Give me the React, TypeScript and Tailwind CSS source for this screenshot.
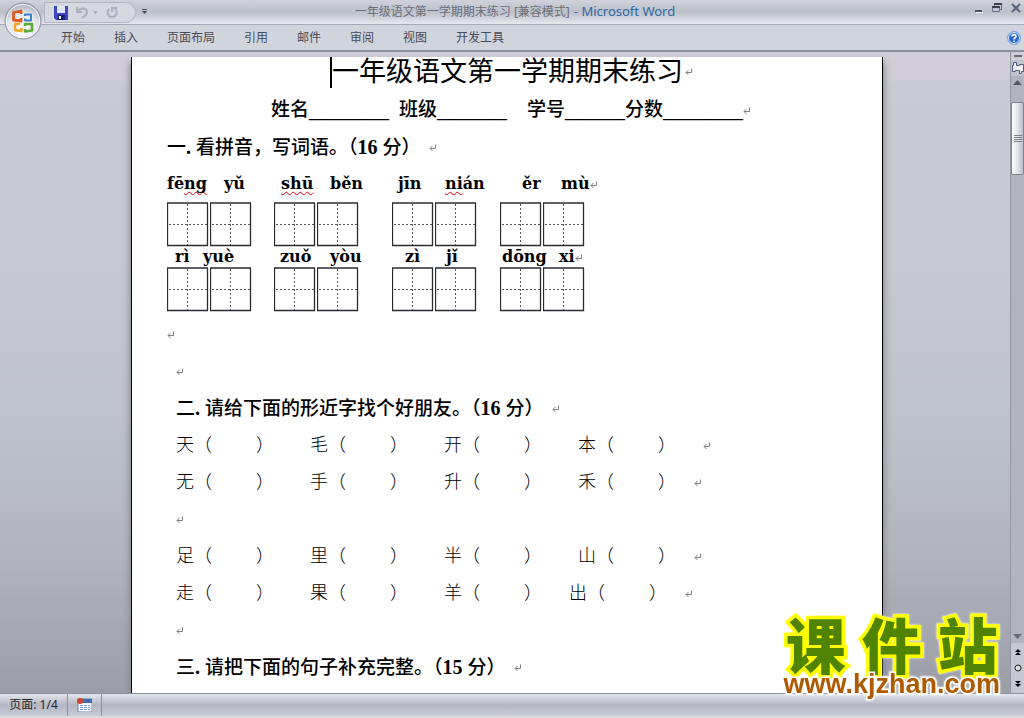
import type { ReactNode } from "react";

const tabs = ["开始", "插入", "页面布局", "引用", "邮件", "审阅", "视图", "开发工具"];

const firstWords = [
  { text: "fēng", bad: "ng", width: "w-[57px]" },
  { text: "yǔ", width: "w-[57px]" },
  { text: "shū", bad: "shū", width: "w-[49px]" },
  { text: "běn", width: "w-[68px]" },
  { text: "jīn", width: "w-[47px]" },
  { text: "nián", bad: "ni", width: "w-[77px]" },
  { text: "ěr", width: "w-[39px]" },
  { text: "mù", width: "" },
];

const secondWords = [
  { text: "rì", width: "w-[28px]" },
  { text: "yuè", width: "w-[77px]" },
  { text: "zuǒ", width: "w-[50px]" },
  { text: "yòu", width: "w-[75px]" },
  { text: "zì", width: "w-[41px]" },
  { text: "jǐ", width: "w-[56px]" },
  { text: "dōng", width: "w-[57px]" },
  { text: "xi", width: "" },
];

interface Word {
  text: string;
  bad?: string;
  width: string;
}

function ReturnMark() {
  return (
    <svg width="8" height="8" viewBox="0 0 8 8" className="shrink-0 mt-0.5" fill="none" stroke="#808080">
      <path d="M6.5 0.5V4.5H1M3.5 2L1 4.5L3.5 7" />
    </svg>
  );
}

function Line({ children, className = "" }: { children?: ReactNode; className?: string }) {
  return <div className={`flex h-[37px] items-center whitespace-pre ${className}`}>{children}</div>;
}

function Pinyin({ words }: { words: Word[] }) {
  return (
    <>
      {words.map(({ text, bad, width }) => {
        const at = bad ? text.indexOf(bad) : text.length;
        return (
          <span key={text} className={`shrink-0 ${width}`}>
            {text.slice(0, at)}
            {bad && (
              <span className="underline decoration-wavy decoration-red-600 decoration-1 underline-offset-2 [text-decoration-skip-ink:none]">
                {bad}
              </span>
            )}
            {text.slice(at + (bad?.length ?? 0))}
          </span>
        );
      })}
    </>
  );
}

function Box() {
  return (
    <svg width="42" height="45" viewBox="0 0 42 45" fill="none" stroke="#2b2b33">
      <path d="M0 1H41M0 43.5H41" strokeWidth="1.6" />
      <path d="M0.5 1V44M40.5 1V44" strokeWidth="1.3" />
      <path d="M20.5 2V43M2 22.5H40" strokeDasharray="2 2" stroke="#55555c" />
    </svg>
  );
}

function BoxRow() {
  return (
    <div className="flex">
      {["w-[107px]", "w-[118px]", "w-[108px]", "w-[85px]"].map((width) => (
        <div key={width} className={`flex gap-px shrink-0 ${width}`}>
          <Box />
          <Box />
        </div>
      ))}
    </div>
  );
}

function Pairs({ chars, shift = false, mark }: { chars: string; shift?: boolean; mark: string }) {
  return (
    <Line className="pl-[9px] text-[18px] font-light">
      {chars.split("").map((char, i) => (
        <span key={char} className={`flex shrink-0 ${i === 3 ? mark : shift && i === 2 ? "w-[125px]" : "w-[134px]"}`}>
          <span>{char}（</span>
          <span className="ml-11">）</span>
        </span>
      ))}
      <ReturnMark />
    </Line>
  );
}

function TitleBar() {
  return (
    <header className="relative flex h-[25px] items-center justify-center border-b border-[#a4aab8] bg-linear-to-b from-[#cfd2da] via-[#bcc0c9] to-[#e6e8ee]">
      {/* quick access */}
      <div className="absolute left-11 top-[2px] flex h-[21px] w-[92px] items-center gap-2 rounded-r-full border border-[#b1b5c0] bg-[#d5d8e0] pl-[9px]">
        <button type="button" aria-label="保存">
          <svg width="14" height="14" viewBox="0 0 14 14">
            <path d="M0 0H14V14H2L0 12Z" fill="#3a48c4" />
            <path d="M3 0H11V7H3Z" fill="#dfe6fb" />
            <path d="M4 9H11V14H4Z" fill="#15206e" />
            <path d="M5 10H7V13H5Z" fill="#fff" />
          </svg>
        </button>
        <button type="button" aria-label="撤消" className="flex items-center gap-1">
          <svg width="13" height="13" viewBox="0 0 13 13" fill="none" stroke="#abb0be" strokeWidth="2">
            <path d="M1 1V6H6M1.5 5.5C5 1 11 2 11 6C11 9 9 10 6 12" />
          </svg>
          <svg width="5" height="3" viewBox="0 0 5 3" fill="#a5a9b5">
            <path d="M0 0H5L2.5 3Z" />
          </svg>
        </button>
        <button type="button" aria-label="重复">
          <svg width="13" height="13" viewBox="0 0 13 13" fill="none" stroke="#abb0be" strokeWidth="2">
            <path d="M3 3C0 6 2 11 6 11C11 11 12 5 9 2M6 6V2H11" />
          </svg>
        </button>
      </div>
      <button type="button" aria-label="自定义快速访问工具栏" className="absolute left-[142px] top-[9px]">
        <svg width="5" height="6" viewBox="0 0 5 6" fill="#454954">
          <path d="M0 0H5V1H0ZM0 2H5L2.5 5Z" />
        </svg>
      </button>
      <h1 className="flex items-baseline gap-1 pl-[6px] text-[12px] text-[#6a6e79]">
        <span>一年级语文第一学期期末练习 [兼容模式]</span>
        <span className="text-[13px] text-[#3068a8]">- Microsoft Word</span>
      </h1>
      {/* window buttons */}
      <div className="absolute right-[3px] top-[3px] flex gap-[9px]">
        <button type="button" aria-label="最小化">
          <svg width="8" height="10" viewBox="0 0 8 10">
            <path d="M0 7H7V9H0Z" fill="#4a4e59" />
            <path d="M1 9H8V10H1Z" fill="#fff" />
          </svg>
        </button>
        <button type="button" aria-label="还原">
          <svg width="10" height="10" viewBox="0 0 10 10" fill="none" stroke="#65708a">
            <path d="M2.5 3V1.5H9.5V6.5H7.5M0.5 4.5H7.5V8.5H0.5Z" />
            <path d="M2 1H10M0 4H8" stroke="#3f434e" strokeWidth="2" />
          </svg>
        </button>
        <button type="button" aria-label="关闭">
          <svg width="10" height="10" viewBox="0 0 10 10" fill="none" stroke="#596174" strokeWidth="2">
            <path d="M1 1L9 9M9 1L1 9" />
          </svg>
        </button>
      </div>
    </header>
  );
}

function OfficeButton() {
  return (
    <button type="button" aria-label="Office 按钮" className="absolute left-[4px] top-[2px] z-10">
      <svg width="38" height="38" viewBox="0 0 38 38" fill="none">
        <defs>
          <radialGradient id="orb" cx="0.5" cy="0.7" r="0.6">
            <stop offset="0" stopColor="#ffffff" />
            <stop offset="0.7" stopColor="#e4e6ec" />
            <stop offset="1" stopColor="#b9bcc6" />
          </radialGradient>
        </defs>
        <circle cx="19" cy="19" r="18" fill="url(#orb)" stroke="#8d919c" />
        <circle cx="19" cy="19" r="16.5" stroke="#f4f5f8" />
        <g strokeLinejoin="round">
          <path d="M17 12V9L9.5 10.5V18L17 19V16" stroke="#e2581c" strokeWidth="2.8" />
          <path d="M21 14V12.5H27V18.5H21V16.5" stroke="#3c83d0" strokeWidth="2" />
          <path d="M16 22H11V28L17.5 29V26" stroke="#f3a81c" strokeWidth="2.4" />
          <path d="M21 24V22H28V28.5L21 29.5V27" stroke="#5cab35" strokeWidth="2.6" />
        </g>
      </svg>
    </button>
  );
}

function Ribbon() {
  return (
    <nav className="flex h-[27px] items-center border-b-2 border-[#8b909d] bg-[#d0d4dd] pl-[61px] pr-[3px] text-[12px] text-[#484c57]">
      <div className="flex flex-1 gap-[29px]">
        {tabs.map((tab) => (
          <button key={tab} type="button">
            {tab}
          </button>
        ))}
      </div>
      <button type="button" aria-label="帮助">
        <svg width="14" height="14" viewBox="0 0 14 14">
          <circle cx="7" cy="7" r="6.5" fill="#2867d2" stroke="#8fa9d8" />
          <circle cx="7" cy="7" r="5.5" fill="none" stroke="#dce8ff" />
          <path d="M5 5.5C5 3 9 3 9 5.5C9 7 7 6.5 7 8.5M7 9.5V11" fill="none" stroke="#fff" strokeWidth="1.6" />
        </svg>
      </button>
    </nav>
  );
}

function ScrollBar() {
  return (
    <aside className="flex w-[14px] shrink-0 flex-col items-center border-l border-[#9498a3] bg-[#b1b4be]">
      <div className="flex h-2 w-full items-center justify-center bg-[#d0ccd7]">
        <span className="h-[2px] w-2 bg-[#666a74]" />
      </div>
      <button type="button" aria-label="标尺" className="flex h-4 w-full items-center justify-center bg-[#bfc3cc]">
        <svg width="12" height="12" viewBox="0 0 12 12" fill="#f2eef4" stroke="#4b5c80">
          <path d="M1.5 0.5H4.5V3.5H7.5V2.5H11.5V9.5H9.5V11.5H7.5V8.5H3.5V9.5H0.5V3.5H1.5Z" />
        </svg>
      </button>
      <button type="button" aria-label="向上滚动" className="flex h-[26px] items-start pt-1">
        <svg width="9" height="5" viewBox="0 0 9 5" fill="#555963">
          <path d="M0 5L4.5 0L9 5Z" />
        </svg>
      </button>
      <div className="flex h-[73px] w-full flex-col items-center justify-center gap-px rounded-xs border border-[#7e828d] bg-linear-to-r from-[#fdfcf8] via-[#e3e5ee] to-[#b9bdcb]">
        <span className="h-px w-2 bg-[#7b7f89]" />
        <span className="h-px w-2 bg-[#7b7f89]" />
        <span className="h-px w-2 bg-[#7b7f89]" />
        <span className="h-px w-2 bg-[#7b7f89]" />
      </div>
      <div className="flex-1" />
      <button type="button" aria-label="向下滚动" className="flex h-[14px] items-center">
        <svg width="9" height="5" viewBox="0 0 9 5" fill="#666a74">
          <path d="M0 0L4.5 5L9 0Z" />
        </svg>
      </button>
      <div className="flex h-[50px] w-full flex-col items-center justify-between bg-[#c6c8d1] py-[6px]">
        <button type="button" aria-label="前一页">
          <svg width="6" height="7" viewBox="0 0 6 7">
            <path d="M0 3L3 0L6 3ZM0 6L3 3L6 6Z" />
          </svg>
        </button>
        <button type="button" aria-label="选择浏览对象">
          <svg width="8" height="8" viewBox="0 0 8 8">
            <circle cx="4" cy="4" r="3" fill="#d9dae0" stroke="#222" />
          </svg>
        </button>
        <button type="button" aria-label="下一页">
          <svg width="6" height="7" viewBox="0 0 6 7">
            <path d="M0 1H6L3 4ZM0 4H6L3 7Z" />
          </svg>
        </button>
      </div>
    </aside>
  );
}

function Paper() {
  return (
    <article className="w-full max-w-[752px] border-x border-black bg-white pl-[35px] text-black shadow-[0_6px_7px_1px_#80838d]">
      <div className="flex h-[34px] pl-[163px]">
        <span className="h-[31px] w-[2px] bg-black" />
        <h2 className="flex h-7 items-center gap-0.5 whitespace-nowrap text-[27px] font-normal leading-7">
          一年级语文第一学期期末练习
          <ReturnMark />
        </h2>
      </div>
      <Line className="pl-[104px] text-[19px] font-medium">
        姓名<Blank>________</Blank>
        <span className="ml-[10px]">班级</span>
        <Blank>_______</Blank>
        <span className="ml-[20px]">学号</span>
        <Blank>______</Blank>
        分数<Blank>________</Blank>
        <ReturnMark />
      </Line>
      <Line className="gap-2 text-[19px] font-medium">
        <span>
          一<Latin>. </Latin>看拼音，写词语。（<Latin>16 </Latin>分）
        </span>
        <ReturnMark />
      </Line>
      <Line className="font-['DejaVu_Serif',serif] text-[16px] font-bold">
        <Pinyin words={firstWords} />
        <ReturnMark />
      </Line>
      <BoxRow />
      <div className="flex h-5 items-center pl-2 font-['DejaVu_Serif',serif] text-[16px] font-bold">
        <Pinyin words={secondWords} />
        <ReturnMark />
      </div>
      <BoxRow />
      <Line className="mt-[3px]">
        <ReturnMark />
      </Line>
      <Line className="pl-[9px]">
        <ReturnMark />
      </Line>
      <Line className="gap-2 pl-[9px] text-[19px] font-medium">
        <span>
          二<Latin>. </Latin>请给下面的形近字找个好朋友。（<Latin>16 </Latin>分）
        </span>
        <ReturnMark />
      </Line>
      <Pairs chars="天毛开本" mark="w-[125px]" />
      <Pairs chars="无手升禾" mark="w-[116px]" />
      <Line className="pl-[9px]">
        <ReturnMark />
      </Line>
      <Pairs chars="足里半山" mark="w-[116px]" />
      <Pairs chars="走果羊出" shift mark="w-[116px]" />
      <Line className="pl-[9px]">
        <ReturnMark />
      </Line>
      <Line className="gap-2 pl-[9px] text-[19px] font-medium">
        <span>
          三<Latin>. </Latin>请把下面的句子补充完整。（<Latin>15 </Latin>分）
        </span>
        <ReturnMark />
      </Line>
    </article>
  );
}

function Blank({ children }: { children: ReactNode }) {
  return <span className="font-['Liberation_Serif',serif] text-[20px] font-normal">{children}</span>;
}

function Latin({ children }: { children: ReactNode }) {
  return <span className="font-['Liberation_Serif',serif] text-[20px] font-bold">{children}</span>;
}

function Watermark() {
  return (
    <div className="absolute bottom-[20px] right-[24px] flex flex-col items-center drop-shadow-[0_0_1px_white]">
      <div className="flex gap-4 text-[60px] font-black leading-[48px] text-[#508400] [-webkit-text-stroke:7px_#ffff00] [paint-order:stroke_fill]">
        <span>课</span>
        <span>件</span>
        <span>站</span>
      </div>
      <a
        href="#site"
        className="font-['Liberation_Sans',sans-serif] text-[27px] font-bold leading-7 text-[#b05a00] [-webkit-text-stroke:3px_#ffffff] [paint-order:stroke_fill]"
      >
        www.kjzhan.com
      </a>
    </div>
  );
}

function StatusBar() {
  return (
    <footer className="flex h-[25px] items-stretch border-b-2 border-t border-b-[#dcdad5] border-t-[#8f929c] bg-linear-to-b from-[#e4e6ec] via-[#b3b7c2] to-[#c9ccd5] text-[12px] text-[#26282e]">
      <button type="button" className="w-[68px] border-r border-[#8f929c]">
        页面: 1/4
      </button>
      <button type="button" aria-label="宏" className="flex w-[34px] items-center justify-center border-r border-[#8f929c]">
        <svg width="15" height="14" viewBox="0 0 15 14">
          <path d="M1 1H15V14H1Z" fill="#f5f7fc" stroke="#6a83b5" />
          <path d="M1 1H15V5H1Z" fill="#3f6bb5" />
          <path d="M3 7.5H13M3 9.5H13M3 11.5H13" stroke="#7e9cd0" strokeDasharray="3 1" />
          <circle cx="3" cy="3" r="3" fill="#d4432c" />
        </svg>
      </button>
    </footer>
  );
}

function App() {
  return (
    <div className="relative flex min-h-screen flex-col overflow-hidden bg-[#d0d4dd] font-['Noto_Sans','Noto_Sans_CJK_SC',sans-serif]">
      <OfficeButton />
      <TitleBar />
      <Ribbon />
      <main className="flex flex-1">
        <div className="flex flex-1 justify-center overflow-hidden bg-[linear-gradient(#d1cdd8_0%,#d1cdd8_4%,#c8cbd4_5%,#c6c9d2_33%,#bfc3cc_54%,#b8bcc5_67%,#b0b3bc_80%,#a3a6ae_92%,#9c9ea6_100%)] pl-1 pt-[5px]">
          <Paper />
        </div>
        <ScrollBar />
      </main>
      <StatusBar />
      <Watermark />
    </div>
  );
}

export default App;
